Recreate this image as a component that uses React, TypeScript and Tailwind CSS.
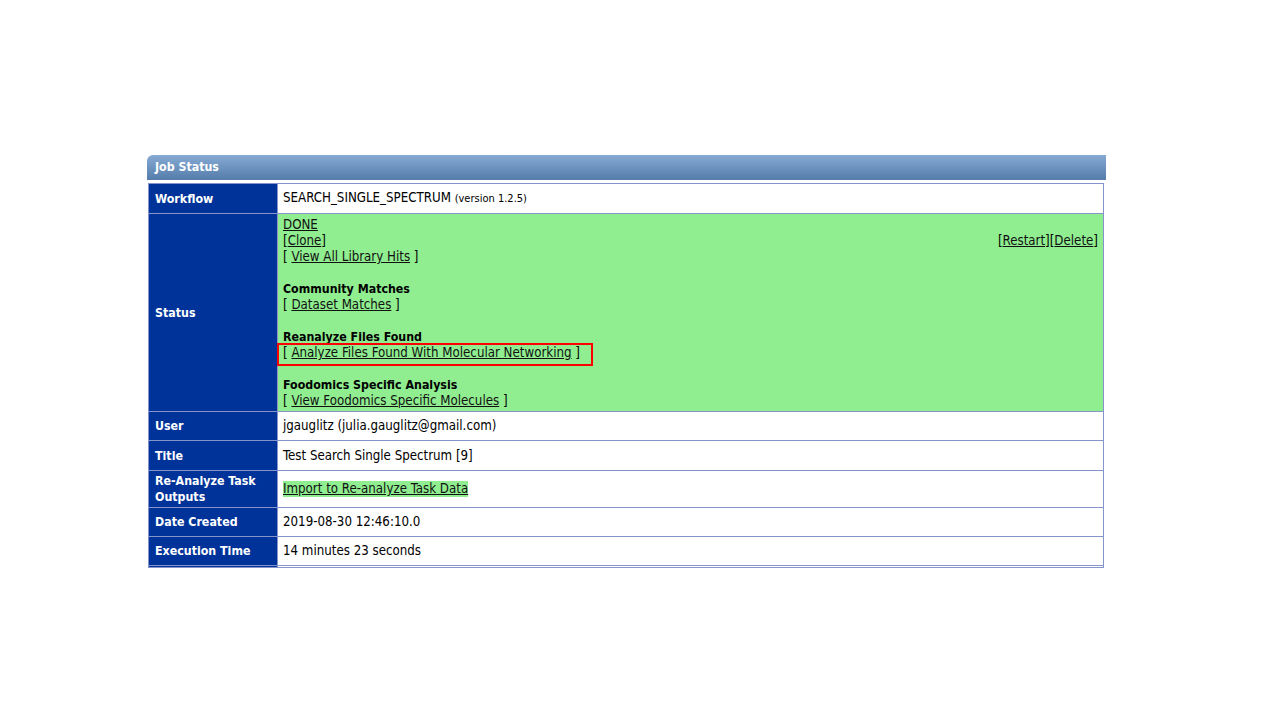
const font = { fontFamily: '"DejaVu Sans Condensed", Tahoma, "Liberation Sans", sans-serif' };

function Label({ children, h }: { children: React.ReactNode; h: string }) {
  return (
    <div className={h + " bg-[#003399] text-white font-bold text-[12.3px] pl-[6px] pr-1 flex items-center leading-[16px]"}>
      {children}
    </div>
  );
}

function Cell({ children }: { children: React.ReactNode }) {
  return <div className="bg-white pl-[5px] pr-1 flex items-center leading-[16px]">{children}</div>;
}

function A({ children }: { children: React.ReactNode }) {
  return <a className="underline text-[#111] cursor-pointer">{children}</a>;
}

export default function App() {
  return (
    <div className="w-[1280px] h-[720px] bg-white pt-[155px] pl-[147px] text-[13.2px] text-black" style={font}>
      <div className="w-[959px]">
        {/* header bar */}
        <div className="h-[25px] rounded-tl-[6px] bg-gradient-to-b from-[#86aad4] to-[#557daa] text-white font-bold text-[12.3px] pl-[8px] flex items-center">
          Job Status
        </div>

        {/* info table */}
        <div className="mt-[3px] ml-px w-[956px] bg-[#8595cc] p-px grid grid-cols-[128px_1fr] gap-px">
          <Label h="h-[29px]">Workflow</Label>
          <Cell>
            <span>
              SEARCH_SINGLE_SPECTRUM <span className="text-[11px]">(version 1.2.5)</span>
            </span>
          </Cell>

          <Label h="h-[197px]">Status</Label>
          <div className="bg-[#90ee90] pl-[5px] pr-[5px] pt-[3px] leading-[16px]">
            <div><A>DONE</A></div>
            <div className="flex justify-between">
              <span>
                [<A>Clone</A>]
              </span>
              <span>
                [<A>Restart</A>][<A>Delete</A>]
              </span>
            </div>
            <div>
              [ <A>View All Library Hits</A> ]
            </div>
            <div className="h-[16px]" />
            <div className="font-bold text-[12.3px]">Community Matches</div>
            <div>
              [ <A>Dataset Matches</A> ]
            </div>
            <div className="h-[16px]" />
            <div className="font-bold text-[12.3px]">Reanalyze Files Found</div>
            <div className="relative">
              [ <A>Analyze Files Found With Molecular Networking</A> ]
              <div className="absolute -left-[6px] -top-[2px] w-[316px] h-[23px] border-2 border-[#ff0000]" />
            </div>
            <div className="h-[16px]" />
            <div className="font-bold text-[12.3px]">Foodomics Specific Analysis</div>
            <div>
              [ <A>View Foodomics Specific Molecules</A> ]
            </div>
          </div>

          <Label h="h-[28px]">User</Label>
          <Cell>jgauglitz (julia.gauglitz@gmail.com)</Cell>

          <Label h="h-[29px]">Title</Label>
          <Cell>Test Search Single Spectrum [9]</Cell>

          <Label h="h-[36px]">
            <span>
              Re-Analyze Task
              <br />
              Outputs
            </span>
          </Label>
          <Cell>
            <span className="bg-[#90ee90]">
              <A>Import to Re-analyze Task Data</A>
            </span>
          </Cell>

          <Label h="h-[28px]">Date Created</Label>
          <Cell>2019-08-30 12:46:10.0</Cell>

          <Label h="h-[28px]">Execution Time</Label>
          <Cell>14 minutes 23 seconds</Cell>

          <div className="bg-[#003399] h-px" />
          <div className="bg-white h-px" />
        </div>
      </div>
    </div>
  );
}
